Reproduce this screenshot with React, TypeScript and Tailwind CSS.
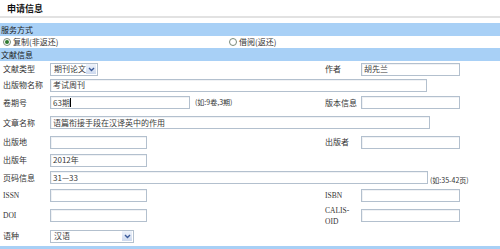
const cjk = "font-['Noto_Sans_CJK_SC',sans-serif]";

function Field({ w, value, cursor }: { w: string; value?: string; cursor?: boolean }) {
  return (
    <div
      className={`${w} h-[13px] border border-[#b3c0ce] bg-white flex items-center pl-[2px] text-[8px] text-[#3a3a3a] whitespace-nowrap shadow-[inset_1px_1px_0_#f0f2f5]`}
    >
      {value}
      {cursor && <span className="inline-block w-px h-[9px] bg-black" />}
    </div>
  );
}

function Select({ w, value }: { w: string; value: string }) {
  return (
    <div className={`${w} h-[13px] border border-[#b3c0ce] bg-white flex items-center justify-between pl-[3px] pr-px text-[8px] text-[#3a3a3a] whitespace-nowrap`}>
      <span>{value}</span>
      <span className="w-[10px] h-[10px] bg-gradient-to-b from-[#eef3fb] to-[#cdd9ee] flex items-center justify-center shrink-0">
        <svg width="7" height="5" viewBox="0 0 7 5">
          <path d="M1 1 L3.5 3.5 L6 1" stroke="#3a5a9a" strokeWidth="1.4" fill="none" />
        </svg>
      </span>
    </div>
  );
}

function Row({ h, children }: { h: string; children: React.ReactNode }) {
  return <div className={`${h} flex items-center`}>{children}</div>;
}

function Label({ children }: { children: React.ReactNode }) {
  return <div className="w-[50px] pl-[3px] shrink-0">{children}</div>;
}

function Radio({ checked }: { checked?: boolean }) {
  return (
    <span className="w-[8px] h-[8px] rounded-full border border-[#7a8a7a] bg-white flex items-center justify-center mr-[2px]">
      {checked && <span className="w-[4px] h-[4px] rounded-full bg-[#2f7a2f]" />}
    </span>
  );
}

const serif = "font-['Liberation_Serif',serif] text-[7.5px]";

export default function App() {
  return (
    <div className={`w-[500px] h-[249px] bg-white overflow-hidden text-[8px] leading-none text-[#333] ${cjk}`}>
      <div className="h-[16px] pl-[7px] pt-[4px] font-bold text-[9px] text-[#111]">申请信息</div>
      <div className="h-[2px] bg-[#e2e2e2]" />
      <div className="h-[5px]" />
      <div className="h-[13px] bg-[#a8d0f6] flex items-center pl-px text-[#1a1a1a]">服务方式</div>
      <div className="h-[12px] flex items-center">
        <div className="w-[229px] flex items-center pl-[3px]">
          <Radio checked />
          复制(非返还)
        </div>
        <div className="flex items-center">
          <Radio />
          借阅(返还)
        </div>
      </div>
      <div className="h-[13px] bg-[#a8d0f6] flex items-center pl-px text-[#1a1a1a]">文献信息</div>

      <Row h="h-[16px]">
        <Label>文献类型</Label>
        <div className="w-[275px]">
          <Select w="w-[48px]" value="期刊论文" />
        </div>
        <div className="w-[36px]">作者</div>
        <Field w="w-[99px]" value="胡先兰" />
      </Row>
      <Row h="h-[16px]">
        <Label>出版物名称</Label>
        <Field w="w-[377px]" value="考试周刊" />
      </Row>
      <Row h="h-[19px]">
        <Label>卷期号</Label>
        <div className="w-[275px] flex items-center">
          <Field w="w-[140px]" value="63期" cursor />
          <span className="ml-[5px] text-[7px]">(如:9卷,3期)</span>
        </div>
        <div className="w-[36px]">版本信息</div>
        <Field w="w-[99px]" />
      </Row>
      <Row h="h-[21px]">
        <Label>文章名称</Label>
        <Field w="w-[380px]" value="语篇衔接手段在汉译英中的作用" />
      </Row>
      <Row h="h-[18px]">
        <Label>出版地</Label>
        <div className="w-[275px]">
          <Field w="w-[97px]" />
        </div>
        <div className="w-[36px]">出版者</div>
        <Field w="w-[99px]" />
      </Row>
      <Row h="h-[18px]">
        <Label>出版年</Label>
        <Field w="w-[97px]" value="2012年" />
      </Row>
      <Row h="h-[17px]">
        <Label>页码信息</Label>
        <Field w="w-[378px]" value="31—33" />
        <span className="ml-[2px] mt-[6px] text-[7px]">(如:35-42页)</span>
      </Row>
      <Row h="h-[19px]">
        <Label>
          <span className={serif}>ISSN</span>
        </Label>
        <div className="w-[275px]">
          <Field w="w-[97px]" />
        </div>
        <div className={`w-[36px] ${serif}`}>ISBN</div>
        <Field w="w-[99px]" />
      </Row>
      <Row h="h-[21px]">
        <Label>
          <span className={serif}>DOI</span>
        </Label>
        <div className="w-[275px]">
          <Field w="w-[97px]" />
        </div>
        <div className={`w-[36px] ${serif} leading-[11px]`}>
          CALIS-
          <br />
          OID
        </div>
        <Field w="w-[99px]" />
      </Row>
      <Row h="h-[20px]">
        <Label>语种</Label>
        <Select w="w-[84px]" value="汉语" />
      </Row>
      <div className="h-[3px] bg-[#a8d0f6]" />
    </div>
  );
}
